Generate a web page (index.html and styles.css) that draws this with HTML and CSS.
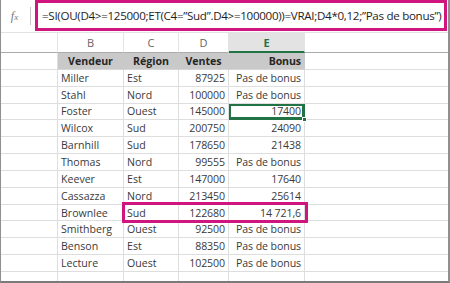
FILE: index.html
```html
<!DOCTYPE html>
<html lang="fr">
<head>
<meta charset="utf-8">
<title>Formule SI</title>
<link rel="stylesheet" href="styles.css">
</head>
<body>
<div class="frame">
  <div class="fbar">
    <div class="fx"><span class="fx-f">f</span><span class="fx-x">x</span></div>
    <div class="fsep"></div>
    <div class="finput">=SI(OU(D4&gt;=125000;ET(C4=”Sud”.D4&gt;=100000))=VRAI;D4*0,12;”Pas de bonus”)</div>
  </div>
  <div class="sheet">
    <div class="row colhead">
      <div class="c rh"></div>
      <div class="c ctr">B</div>
      <div class="c ctr">C</div>
      <div class="c ctr">D</div>
      <div class="c ctr active">E</div>
      <div class="c last"></div>
    </div>
    <div class="row thead">
      <div class="c rh"></div>
      <div class="c ctr">Vendeur</div>
      <div class="c ctr">Région</div>
      <div class="c ctr">Ventes</div>
      <div class="c num">Bonus</div>
      <div class="c last"></div>
    </div>
    <div class="row"><div class="c rh"></div><div class="c">Miller</div><div class="c">Est</div><div class="c num">87925</div><div class="c num">Pas de bonus</div><div class="c last"></div></div>
    <div class="row"><div class="c rh"></div><div class="c">Stahl</div><div class="c">Nord</div><div class="c num">100000</div><div class="c num">Pas de bonus</div><div class="c last"></div></div>
    <div class="row"><div class="c rh"></div><div class="c">Foster</div><div class="c">Ouest</div><div class="c num">145000</div><div class="c num sel">17400</div><div class="c last"></div></div>
    <div class="row"><div class="c rh"></div><div class="c">Wilcox</div><div class="c">Sud</div><div class="c num">200750</div><div class="c num">24090</div><div class="c last"></div></div>
    <div class="row"><div class="c rh"></div><div class="c">Barnhill</div><div class="c">Sud</div><div class="c num">178650</div><div class="c num">21438</div><div class="c last"></div></div>
    <div class="row"><div class="c rh"></div><div class="c">Thomas</div><div class="c">Nord</div><div class="c num">99555</div><div class="c num">Pas de bonus</div><div class="c last"></div></div>
    <div class="row"><div class="c rh"></div><div class="c">Keever</div><div class="c">Est</div><div class="c num">147000</div><div class="c num">17640</div><div class="c last"></div></div>
    <div class="row"><div class="c rh"></div><div class="c">Cassazza</div><div class="c">Nord</div><div class="c num">213450</div><div class="c num">25614</div><div class="c last"></div></div>
    <div class="row"><div class="c rh"></div><div class="c">Brownlee</div><div class="c">Sud</div><div class="c num">122680</div><div class="c num">14 721,6</div><div class="c last"></div><div class="hl"></div></div>
    <div class="row"><div class="c rh"></div><div class="c">Smithberg</div><div class="c">Ouest</div><div class="c num">92500</div><div class="c num">Pas de bonus</div><div class="c last"></div></div>
    <div class="row"><div class="c rh"></div><div class="c">Benson</div><div class="c">Est</div><div class="c num">88350</div><div class="c num">Pas de bonus</div><div class="c last"></div></div>
    <div class="row"><div class="c rh"></div><div class="c">Lecture</div><div class="c">Ouest</div><div class="c num">102500</div><div class="c num">Pas de bonus</div><div class="c last"></div></div>
    <div class="row"><div class="c rh"></div><div class="c"></div><div class="c"></div><div class="c"></div><div class="c"></div><div class="c last"></div></div>
  </div>
</div>
</body>
</html>
```

FILE: styles.css
```css
html, body {
  margin: 0;
  padding: 0;
  background: #ffffff;
}

.frame {
  width: 450px;
  height: 283px;
  box-sizing: border-box;
  border-left: 1px solid #8f8f8f;
  border-right: 2px solid #8f8f8f;
  border-bottom: 2px solid #7a7a7a;
  overflow: hidden;
  font-family: "Open Sans", "Noto Sans", sans-serif;
  color: #3a3a3a;
  background: #fff;
}

.fbar {
  height: 33px;
  display: flex;
  align-items: center;
  border-bottom: 1px solid #e2e2e2;
  box-sizing: border-box;
}

.fx {
  flex: 0 0 29px;
  display: flex;
  justify-content: center;
  align-items: baseline;
  font-family: "Liberation Serif", serif;
  font-style: italic;
  color: #777;
  font-size: 12px;
  padding-right: 2px;
  box-sizing: border-box;
}

.fx-x {
  font-size: 9px;
}

.fsep {
  flex: 0 0 1px;
  height: 18px;
  background: #c6c6c6;
}

.finput {
  margin-left: 4px;
  height: 31px;
  flex: 1 1 auto;
  min-width: 0;
  margin-right: 1px;
  margin-top: -1px;
  border: 3px solid #d1157f;
  box-sizing: border-box;
  display: flex;
  align-items: center;
  padding-left: 4px;
  font-size: 11.6px;
  letter-spacing: -0.3px;
  color: #1e1e1e;
  white-space: nowrap;
  overflow: hidden;
}

.sheet {
  display: flex;
  flex-direction: column;
}

.row {
  display: grid;
  grid-template-columns: 57px 66px 55px 50px 76px 1fr;
  height: 16.85px;
  font-size: 10.6px;
}

.c {
  grid-row: 1;
  border-right: 1px solid #dedede;
  border-bottom: 1px solid #dedede;
  padding: 0 3px;
  display: flex;
  align-items: center;
  white-space: nowrap;
  overflow: hidden;
  min-width: 0;
}

.c:nth-child(1) { grid-column: 1; }
.c:nth-child(2) { grid-column: 2; }
.c:nth-child(3) { grid-column: 3; }
.c:nth-child(4) { grid-column: 4; }
.c:nth-child(5) { grid-column: 5; }
.c:nth-child(6) { grid-column: 6; }

.c.last {
  border-right: none;
}

.c.ctr {
  justify-content: center;
}

.c.num {
  justify-content: flex-end;
  letter-spacing: -0.1px;
}

.colhead {
  height: 20px;
  font-size: 11px;
  color: #666;
}

.colhead .c {
  border-bottom: 1px solid #ababab;
  border-right-color: #e4e4e4;
}

.colhead .c.active {
  background: #e3e3e3;
  color: #217346;
  font-weight: 700;
  border-bottom: 2px solid #217346;
}

.thead .c {
  background: #c9c9c9;
  font-weight: 700;
  color: #262626;
  border-right-color: #c9c9c9;
  border-bottom-color: #d6d6d6;
}

.thead .c.rh,
.thead .c.last {
  background: #fff;
  border-bottom-color: #dedede;
}

.thead .c.rh {
  border-right-color: #dedede;
}

.c.sel {
  position: relative;
  overflow: visible;
  box-shadow: inset 0 0 0 2px #217346;
  border-right-color: #217346;
  border-bottom-color: #217346;
}

.c.sel::after {
  content: "";
  position: absolute;
  right: -3px;
  bottom: -3px;
  width: 5px;
  height: 5px;
  background: #217346;
  border: 1px solid #fff;
  box-sizing: border-box;
}

.hl {
  grid-column: 3 / 6;
  grid-row: 1;
  margin: -3px -3px -2px -2px;
  border: 3px solid #d1157f;
  pointer-events: none;
  z-index: 1;
}
```
